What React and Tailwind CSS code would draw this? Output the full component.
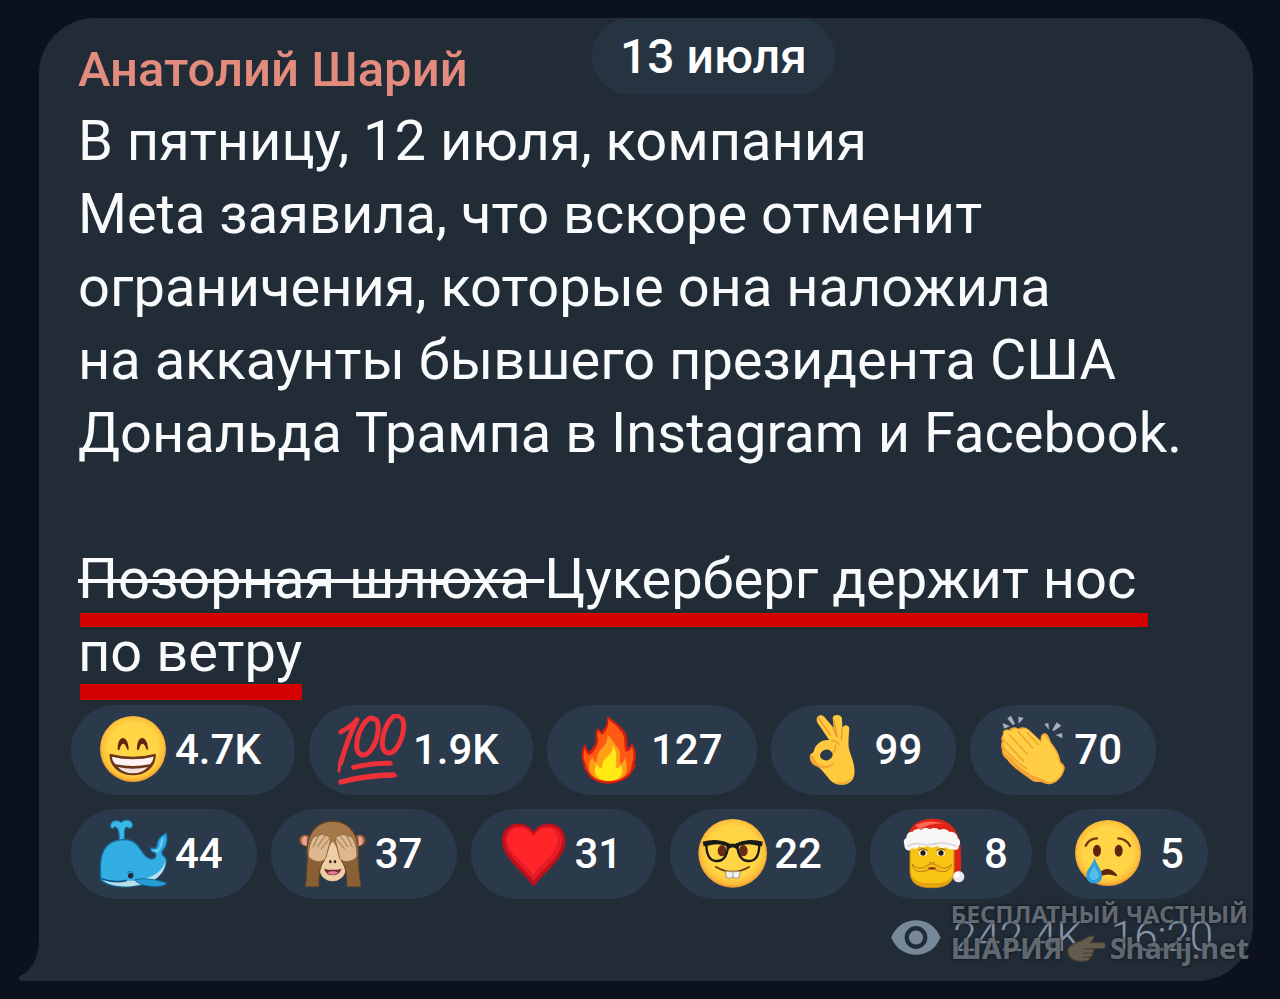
import React, { useState } from "react";

const GrinIcon = () => (
  <svg viewBox="111 57 216 216" className="size-[72px] shrink-0" aria-hidden="true">
    <defs>
      <radialGradient id="face" cx="50%" cy="48%" r="52%">
        <stop offset="0.72" stopColor="#ffd445" />
        <stop offset="0.9" stopColor="#fcbf3a" />
        <stop offset="1" stopColor="#ee9330" />
      </radialGradient>
    </defs>
    <circle cx="219" cy="162" r="99" fill="url(#face)" />
    <path d="M173 162C173 118 203 118 206 160C207 166 202 166 200 160C195 142 184 142 180 160C178 167 173 167 173 162Z" fill="#5c2510" />
    <path d="M231 162C231 118 261 118 264 160C265 166 260 166 258 160C253 142 242 142 238 160C236 167 231 167 231 162Z" fill="#5c2510" />
    <path d="M149 176Q218 194 287 176C290 214 258 241 219 241C179 241 146 214 149 176Z" fill="#6b3318" />
    <path d="M155 185Q218 200 281 185Q279 199 270 208Q219 218 167 208Q157 199 155 185Z" fill="#fdf3f1" />
    <path d="M173 216Q219 226 264 216Q246 235 219 235Q191 235 173 216Z" fill="#f3e3e0" />
  </svg>
);

const HundredIcon = () => (
  <svg viewBox="27 27 216 216" className="size-[72px] shrink-0" aria-hidden="true">
    <g fill="none" stroke="#ee3139" strokeLinecap="round" strokeLinejoin="round">
      <path d="M44 81C61 72 79 60 92 45" strokeWidth="14" />
      <path d="M93 44C74 82 58 126 44 174" strokeWidth="15" />
      <path d="M43 168L39 198" strokeWidth="9" />
      <path d="M143 42C124 27 94 79 92 119C91 153 116 161 136 133C157 104 162 60 151 45" strokeWidth="15" />
      <path d="M218 34C199 23 172 67 169 111C168 151 196 152 213 127C233 96 237 58 229 42" strokeWidth="15" />
      <path d="M83 187Q137 174 193 175" strokeWidth="15" />
      <path d="M45 231Q118 211 203 210" strokeWidth="16" />
    </g>
    <path d="M190 202L217 213L193 218Z" fill="#ee3139" />
  </svg>
);

const FireIcon = () => (
  <svg viewBox="516 57 216 216" className="size-[72px] shrink-0" aria-hidden="true">
    <path d="M618 62C638 76 660 93 673 113C683 131 675 150 682 160C687 158 690 150 692 143C705 161 708 184 701 205C706 209 703 219 698 222C686 251 655 266 621 266C588 266 564 250 556 229C548 222 549 213 547 205C539 187 541 166 551 147C558 155 558 166 564 170C575 161 584 149 585 132C582 117 584 109 591 97C594 104 597 107 602 110C616 96 621 79 618 62Z" fill="#d91d0d" />
    <path d="M620 72C636 84 654 98 665 116C674 134 666 153 676 171C685 169 690 161 693 155C701 178 696 196 692 209C691 241 657 259 621 259C588 259 561 241 555 209C547 194 546 175 551 160C554 171 558 180 565 180C580 171 592 151 592 134C588 121 589 114 593 108C597 116 601 119 606 118C620 104 625 86 620 72Z" fill="#ff5a14" />
    <path d="M619 119C622 137 612 151 601 162C587 177 588 193 586 202C580 201 576 192 574 185C559 208 561 237 584 249C604 262 643 262 665 247C681 235 682 205 671 190C669 199 664 206 657 206C655 194 661 172 651 159C638 146 634 130 619 119Z" fill="#ff9f17" />
    <path d="M634 150C640 167 626 178 614 190C604 200 605 212 601 220C594 220 590 212 588 207C576 223 581 245 599 252C615 260 642 258 654 248C670 236 663 214 658 211C655 219 650 222 645 218C641 202 655 174 634 150Z" fill="#ffea16" />
  </svg>
);

const OkHandIcon = () => (
  <svg viewBox="105 57 216 216" className="size-[72px] shrink-0" aria-hidden="true">
    <path d="M166 66C175 56 187 62 193 73L215 99L212 70C212 57 239 57 240 71L241 99C244 86 262 89 262 101C260 124 259 139 260 156C264 181 281 207 277 237C275 261 254 272 232 269C210 266 201 251 191 239C183 228 174 219 164 212C150 209 141 195 144 179C150 174 154 176 157 163C164 145 183 132 202 136L167 84C163 77 163 71 166 66Z" fill="#ffca3d" />
    <path d="M144 181C154 175 157 191 164 202C175 218 202 216 221 197C211 218 188 226 170 216C152 212 142 199 144 181Z" fill="#f5a534" />
    <path d="M169 69L206 121M215 74L225 122M241 101L238 135M213 99L225 126M208 137Q222 137 232 148M211 175Q223 166 220 151" fill="none" stroke="#eb982f" strokeWidth="4" strokeLinecap="round" />
    <path d="M276 231C272 259 244 266 218 260C237 275 270 269 276 231Z" fill="#f3a333" />
    <ellipse cx="193" cy="180" rx="19" ry="16" transform="rotate(-12 193 180)" fill="#2a3a4b" />
  </svg>
);

const ClapIcon = () => (
  <svg viewBox="105 57 216 216" className="size-[72px] shrink-0" aria-hidden="true">
    <path d="M125 84L147 94L129 101ZM139 70L150 62L162 87L155 90ZM172 65L188 69L173 86ZM250 87L262 84L264 104ZM287 82L301 92L278 109L274 105ZM284 120L303 114L304 130Z" fill="#a9afb8" />
    <path d="M126 119C123 106 133 101 144 105C151 94 164 95 172 101C184 93 196 97 205 105L239 137C237 125 243 114 253 115C263 117 265 133 272 145C284 160 294 174 299 201C309 207 315 217 309 228C302 248 288 264 268 267C252 270 245 260 234 261C213 262 205 249 193 242C172 228 151 212 139 195C128 187 121 176 123 164C119 155 120 145 123 139C119 132 121 124 126 119Z" fill="#f6a634" />
    <path d="M129 118C128 104 142 103 151 110C156 98 169 98 179 106C189 97 199 103 208 111L242 143C240 128 246 116 255 122C261 139 273 152 281 166C292 181 292 198 297 208C308 213 307 226 300 237C291 255 270 266 257 259C248 249 229 250 212 239C188 226 162 204 145 184C132 177 125 166 133 158C124 148 126 137 133 137C127 130 126 123 129 118Z" fill="#ffce42" />
    <path d="M145 119L199 178M171 109L215 159M198 112L232 149M132 139L187 198M130 162C151 184 169 204 197 221" fill="none" stroke="#ed9e32" strokeWidth="4" strokeLinecap="round" />
  </svg>
);

const WhaleIcon = () => (
  <svg viewBox="111 369 216 216" className="size-[72px] shrink-0" aria-hidden="true">
    <path d="M178 436C178 411 177 402 167 396C160 393 162 405 153 398C147 380 169 371 183 383C196 371 219 374 217 393C213 404 206 398 200 396C190 401 193 415 193 436Z" fill="#3bb6e7" stroke="#1684b5" strokeWidth="3" />
    <path d="M123 556C118 514 120 472 143 450C168 429 211 428 230 448C247 466 252 490 276 492C288 491 290 480 285 474C275 474 269 465 273 458C281 461 288 459 291 454C290 434 301 423 319 414C324 434 319 455 307 468C302 480 312 484 317 488C325 510 299 551 270 562C258 568 246 571 236 571C192 580 145 575 123 556Z" fill="#32aee2" stroke="#12689b" strokeWidth="4" />
    <path d="M309 424C300 437 302 453 295 462C288 468 282 463 276 462C279 471 289 468 292 476C301 461 311 451 309 424Z" fill="#6bd2f1" />
    <path d="M315 492C316 520 286 545 249 552C230 560 206 556 187 558C160 564 137 558 126 550C137 574 197 580 239 569C282 566 324 530 315 492Z" fill="#b9dfec" />
    <path d="M125 551Q160 565 200 557" fill="none" stroke="#0e5788" strokeWidth="5" />
    <path d="M224 555C249 546 291 555 320 564C315 578 248 580 224 555Z" fill="#279ed6" stroke="#126da4" strokeWidth="3" />
    <circle cx="212" cy="542" r="8" fill="#202a35" />
    <path d="M202 533Q213 525 221 536" fill="none" stroke="#176994" strokeWidth="3" />
  </svg>
);

const MonkeyIcon = () => (
  <svg viewBox="21 24 216 216" className="size-[72px] shrink-0" aria-hidden="true">
    <g stroke="#5b4025" strokeWidth="4">
      <circle cx="45" cy="91" r="17" fill="#a87b4e" />
      <circle cx="209" cy="91" r="17" fill="#a87b4e" />
      <path d="M53 150C42 83 72 34 128 33C184 34 214 83 203 150L175 185H81Z" fill="#a47848" />
    </g>
    <path d="M44 78Q32 87 39 104L50 109V82ZM210 78Q222 87 215 104L206 109V82Z" fill="#f3a09a" />
    <path d="M128 95C112 108 112 145 98 155C78 180 94 211 128 214C162 211 178 180 158 155C144 145 144 108 128 95Z" fill="#efcea5" />
    <g stroke="#65462a" strokeWidth="3">
      <path d="M53 142L103 151C87 171 86 202 87 230H46C52 198 49 169 53 142Z" fill="#896033" />
      <path d="M153 151L204 142C207 169 206 198 213 230H171C171 202 169 171 153 151Z" fill="#896033" />
    </g>
    <path d="M55 141C54 119 60 98 68 85C73 78 81 76 83 80C94 70 103 72 104 77C116 74 124 87 120 98L107 145C97 160 72 157 55 141Z" fill="#ddb88f" stroke="#8f6948" strokeWidth="3" />
    <path d="M201 141C202 119 196 98 188 85C183 78 175 76 173 80C162 70 153 72 152 77C140 74 134 87 138 98L149 145C159 160 184 157 201 141Z" fill="#ddb88f" stroke="#8f6948" strokeWidth="3" />
    <path d="M83 82L69 111M103 80L83 110M117 88L94 116M173 82L187 111M153 80L173 110M140 88L163 116" stroke="#9a7350" strokeWidth="3" strokeLinecap="round" />
    <ellipse cx="121" cy="155" rx="4" ry="5" fill="#3f2d24" />
    <ellipse cx="135" cy="155" rx="4" ry="5" fill="#3f2d24" />
    <path d="M102 176Q128 183 155 176Q147 196 128 196Q109 196 102 176Z" fill="#762b3b" />
    <path d="M112 188Q128 180 145 188Q128 200 112 188Z" fill="#e58395" />
  </svg>
);

const HeartIcon = () => (
  <svg viewBox="288 369 216 216" className="size-[72px] shrink-0" aria-hidden="true">
    <path d="M398 411C378 374 311 376 303 429C298 486 364 527 392 568Q398 578 404 568C434 527 500 486 493 429C485 376 417 374 398 411Z" fill="#bc101b" />
    <path d="M398 421C380 384 319 383 312 430C309 480 371 519 398 558C427 519 488 480 484 430C477 383 415 384 398 421Z" fill="#e51b25" />
    <path d="M398 426C381 392 326 388 319 429C316 471 374 505 398 539C423 505 472 471 470 429C465 388 413 392 398 426Z" fill="#ff2529" />
  </svg>
);

const NerdIcon = () => (
  <svg viewBox="888 369 216 216" className="size-[72px] shrink-0" aria-hidden="true">
    <circle cx="998" cy="475" r="103" fill="url(#face)" />
    <ellipse cx="966" cy="467" rx="13" ry="17" fill="#652b12" />
    <ellipse cx="1030" cy="467" rx="13" ry="17" fill="#652b12" />
    <path d="M919 446Q950 435 984 448C984 475 974 498 951 498C927 498 919 473 919 446ZM1012 448Q1046 435 1078 446C1078 473 1070 498 1046 498C1022 498 1012 475 1012 448Z" fill="none" stroke="#171a19" strokeWidth="7" />
    <path d="M908 440Q950 427 989 446H1007Q1047 427 1088 440L1086 454L1076 453Q1044 442 1018 453L1012 464Q998 449 984 464L978 453Q952 442 921 453L911 454Z" fill="#171a19" />
    <path d="M948 516Q998 545 1047 516" fill="none" stroke="#6b3417" strokeWidth="6" strokeLinecap="round" />
    <path d="M976 529Q998 532 1021 529L1017 548Q1007 554 999 546Q989 554 979 548Z" fill="#f2f2f1" stroke="#a3957c" strokeWidth="3" />
    <path d="M999 531V547" stroke="#a9aaa7" strokeWidth="3" />
  </svg>
);

const SantaIcon = () => (
  <svg viewBox="408 369 216 216" className="size-[72px] shrink-0" aria-hidden="true">
    <path d="M445 427C447 390 478 371 518 371C567 371 590 402 600 438C604 472 605 505 602 537H582L576 442Z" fill="#df2417" />
    <path d="M466 391Q507 370 554 387Q515 380 478 404Z" fill="#ff6851" />
    <path d="M450 449Q516 424 582 449V527C582 562 560 578 516 578C470 578 450 562 450 527Z" fill="#f9c515" stroke="#c98313" strokeWidth="3" />
    <path d="M452 530C454 562 473 575 516 575C558 575 577 562 580 530C574 556 558 565 516 565C474 565 458 556 452 530Z" fill="#e3a10f" />
    <path d="M433 449C429 438 434 430 439 430C439 417 449 408 457 411C464 400 478 401 483 405C492 396 504 399 510 403C520 396 534 400 539 405C551 398 564 404 569 411C580 408 593 418 593 429C602 434 602 448 596 454C597 466 584 468 578 462C571 466 562 462 558 457C548 462 537 458 532 452C521 460 509 458 503 452C493 460 483 457 478 453C473 462 461 463 456 460C449 472 433 466 433 449Z" fill="#f6f6f5" />
    <path d="M444 455Q460 442 482 447T529 446T588 453" fill="none" stroke="#d7d5d4" strokeWidth="5" />
    <path d="M476 466Q488 457 502 467M530 467Q544 457 556 466" fill="none" stroke="#8f620a" strokeWidth="4" />
    <ellipse cx="489" cy="474" rx="12" ry="10" fill="#fffaf0" />
    <ellipse cx="543" cy="474" rx="12" ry="10" fill="#fffaf0" />
    <circle cx="489" cy="474" r="8" fill="#241c15" />
    <circle cx="543" cy="474" r="8" fill="#241c15" />
    <path d="M507 502Q516 508 526 502M456 508Q479 529 500 512Q517 501 533 512Q555 529 575 508Q570 530 548 530Q528 529 516 519Q503 529 482 530Q461 530 456 508Z" fill="#f8bd16" stroke="#bd8012" strokeWidth="3" />
    <path d="M502 520Q516 512 530 520Q516 529 502 520Z" fill="#8d391e" />
    <circle cx="596" cy="545" r="17" fill="#e9eaf0" />
    <circle cx="591" cy="540" r="8" fill="#ffffff" />
  </svg>
);

const CryIcon = () => (
  <svg viewBox="339 369 216 216" className="size-[72px] shrink-0" aria-hidden="true">
    <circle cx="447" cy="474" r="99" fill="url(#face)" />
    <path d="M380 452Q391 430 414 430M478 430Q502 431 513 453" fill="none" stroke="#70370f" strokeWidth="7" strokeLinecap="round" />
    <ellipse cx="414" cy="467" rx="12" ry="18" fill="#5c2510" />
    <ellipse cx="479" cy="467" rx="12" ry="18" fill="#5c2510" />
    <path d="M425 533Q448 512 472 541Q448 531 425 541Z" fill="#5c2510" stroke="#5c2510" strokeWidth="5" strokeLinejoin="round" />
    <path d="M407 487C403 510 382 521 382 542C382 557 393 565 406 565C420 565 429 556 429 542C429 522 411 511 407 487Z" fill="#2f9fda" />
    <path d="M406 507C404 523 391 530 391 543C394 561 418 558 420 543C420 529 407 523 406 507Z" fill="#55bdea" />
  </svg>
);

const EyeIcon = () => (
  <svg viewBox="20 74 150 106" className="h-[35px] w-[50px] shrink-0" aria-label="Просмотры">
    <path d="M20 127C33 94 61 75 95 75C129 75 156 94 169 127C156 160 129 179 95 179C61 179 33 160 20 127Z" fill="#778899" />
    <circle cx="95" cy="127" r="28" fill="none" stroke="#222c37" strokeWidth="13" />
  </svg>
);

const PointIcon = () => (
  <svg viewBox="578 154 116 80" className="h-[27px] w-[39px] shrink-0" aria-hidden="true">
    <path d="M580 196C588 181 608 176 622 170C634 164 645 156 656 156C661 162 655 169 647 177H687C694 180 693 192 687 194H651C660 196 659 205 651 207C658 213 653 219 645 219C649 229 636 233 622 232C600 233 580 224 580 196Z" fill="#655b4d" stroke="#443e37" strokeWidth="3" />
    <path d="M625 195H650M626 208H650M622 220H644" stroke="#443e37" strokeWidth="3" />
  </svg>
);

const reactions = [
  { id: "grin", icon: GrinIcon, count: "4.7K" },
  { id: "hundred", icon: HundredIcon, count: "1.9K" },
  { id: "fire", icon: FireIcon, count: "127" },
  { id: "ok", icon: OkHandIcon, count: "99" },
  { id: "clap", icon: ClapIcon, count: "70" },
  { id: "whale", icon: WhaleIcon, count: "44" },
  { id: "monkey", icon: MonkeyIcon, count: "37" },
  { id: "heart", icon: HeartIcon, count: "31" },
  { id: "nerd", icon: NerdIcon, count: "22" },
  { id: "santa", icon: SantaIcon, count: "8" },
  { id: "cry", icon: CryIcon, count: "5" },
];

const Reaction = ({ icon: Icon, count, label, active, onClick }) => (
  <button
    type="button"
    aria-label={`${label} ${count}`}
    aria-pressed={active}
    onClick={onClick}
    className="flex h-[90px] cursor-pointer items-center gap-[6px] rounded-full bg-[#2a3a4b] pr-6 pl-[26px]"
  >
    <Icon />
    <span
      className={`text-[42px] leading-[50px] font-medium text-white ${
        count.length === 1 ? "pl-[10px]" : "pr-[10px]"
      }`}
    >
      {count}
    </span>
  </button>
);

const App = () => {
  const [selected, setSelected] = useState(null);

  return (
    <main className="min-h-screen bg-[#0b121d] pt-[18px] pr-[27px] pb-[18px] pl-[39px] font-['Roboto','Noto_Sans',sans-serif]">
      <article className="relative rounded-[56px] rounded-bl-none bg-[#222c37] px-8 pt-5 pb-5">
        {/* Bubble tail */}
        <svg
          viewBox="0 0 21 40"
          className="absolute bottom-0 -left-5 h-10 w-[21px]"
          aria-hidden="true"
        >
          <path d="M21 0H20C20 16 13 29 1 35Q-2 40 4 40H21Z" fill="#222c37" />
        </svg>

        {/* Floating date */}
        <time className="absolute top-0 left-[553px] rounded-full bg-[#263441] px-7 text-[48px] leading-[77px] font-medium text-white">
          13 июля
        </time>

        <header className="px-[7px] pb-[3px]">
          <h1 className="text-[49px] leading-[64px] font-medium text-[#e38b7d]">
            Анатолий Шарий
          </h1>
        </header>

        <div className="px-[7px] text-[56px] leading-[73px] font-normal text-[#f8fafc]">
          <p>
            <span className="block">В пятницу, 12 июля, компания</span>
            <span className="block">Meta заявила, что вскоре отменит</span>
            <span className="block">ограничения, которые она наложила</span>
            <span className="block">на аккаунты бывшего президента США</span>
            <span className="block">Дональда Трампа в Instagram и Facebook.</span>
          </p>
          <p className="pt-[73px]">
            <span className="relative block w-fit">
              <s className="decoration-[4px]">Позорная шлюха </s>
              Цукерберг держит нос
              <span className="absolute -right-3 -bottom-[11px] left-[2px] h-[14px] bg-[#d50000]" />
            </span>
            <span className="relative block w-fit">
              по ветру
              <span className="absolute right-0 -bottom-[11px] left-[2px] h-[16px] bg-[#d50000]" />
            </span>
          </p>
        </div>

        <div className="mt-4 flex flex-wrap gap-[14px]">
          {reactions.map((r) => (
            <Reaction
              key={r.id}
              icon={r.icon}
              label={r.id}
              count={r.count}
              active={selected === r.id}
              onClick={() => setSelected(selected === r.id ? null : r.id)}
            />
          ))}
        </div>

        <footer className="mt-[14px] flex items-center justify-end gap-3 pr-2 text-[42px] leading-[48px] font-light text-[#8796a5]">
          <EyeIcon />
          <span>242.4K</span>
          <time className="pl-4">16:20</time>
        </footer>

        {/* Watermark */}
        <div className="pointer-events-none absolute right-1 bottom-4 font-['Noto_Sans',sans-serif] font-bold whitespace-nowrap text-[#b4bac2]/50 [text-shadow:0_0_2px_#0f161e,0_0_4px_#151d26]">
          <p className="text-[24px] leading-[34px]">БЕСПЛАТНЫЙ ЧАСТНЫЙ</p>
          <p className="flex items-center gap-1 text-[29px] leading-[34px]">
            ШАРИЯ
            <PointIcon />
            Sharij.net
          </p>
        </div>
      </article>
    </main>
  );
};

export default App;
